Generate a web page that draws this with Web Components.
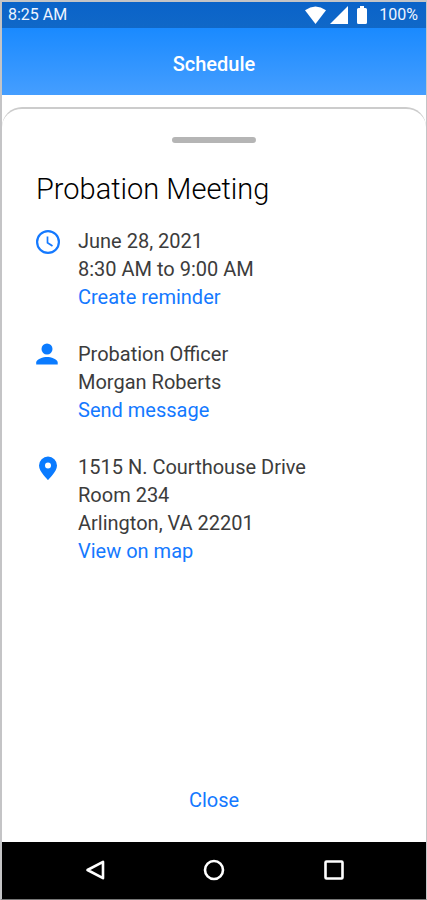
<!DOCTYPE html>
<html lang="en">
<head>
<meta charset="utf-8">
<meta name="viewport" content="width=device-width, initial-scale=1">
<title>Schedule</title>
<style>
  html { height: 100%; }
  body { display: grid; min-height: 100%; margin: 0; font-family: Roboto, "Liberation Sans", sans-serif; color: #3c3c3c; background: #fff; }
</style>
</head>
<body>
<phone-screen>
  <status-bar slot="top" time="8:25 AM" battery="100%"></status-bar>
  <app-header slot="top">Schedule</app-header>
  <bottom-sheet heading="Probation Meeting">
    <detail-row icon="clock">
      <div>June 28, 2021</div>
      <div>8:30 AM to 9:00 AM</div>
      <action-link slot="action" href="#reminder">Create reminder</action-link>
    </detail-row>
    <detail-row icon="person">
      <div>Probation Officer</div>
      <div>Morgan Roberts</div>
      <action-link slot="action" href="#message">Send message</action-link>
    </detail-row>
    <detail-row icon="pin">
      <div>1515 N. Courthouse Drive</div>
      <div>Room 234</div>
      <div>Arlington, VA 22201</div>
      <action-link slot="action" href="#map">View on map</action-link>
    </detail-row>
  </bottom-sheet>
  <nav-bar slot="bottom"></nav-bar>
</phone-screen>

<script>
  const define = (name, render) => customElements.define(name, class extends HTMLElement {
    constructor() {
      super();
      this.attachShadow({ mode: 'open' });
    }
    connectedCallback() {
      this.shadowRoot.innerHTML = render(this);
    }
  });

  define('phone-screen', () => `
    <style>
      :host { display: flex; flex-direction: column; box-sizing: border-box;
              border: solid #c4c4c6; border-width: 2px 1px 1px 2px; border-bottom-color: #777; }
      main { flex: 1; display: flex; flex-direction: column; padding-top: 12px; }
    </style>
    <slot name="top"></slot>
    <main><slot></slot></main>
    <slot name="bottom"></slot>`);

  define('status-bar', el => `
    <style>
      :host { display: flex; align-items: center; justify-content: space-between; height: 26px;
              padding: 0 8px 0 6px; background: linear-gradient(#0a63c9, #1068c8); color: #eef4ff;
              font-size: 16px; line-height: 26px; }
      .right { display: flex; align-items: center; }
      svg { display: block; margin-right: 10px; }
    </style>
    <span>${el.getAttribute('time')}</span>
    <div class="right">
      <svg width="64" height="20" viewBox="0 0 64 20" fill="#fff" aria-hidden="true">
        <path d="M0 5.200Q10.500 -2.200 21 5.200L10.500 19Z"/>
        <path d="M43 1V19H25Z"/>
        <path d="M55 1h4v2h1.500a1.500 1.500 0 0 1 1.500 1.500v13a1.500 1.500 0 0 1-1.500 1.500h-7a1.500 1.500 0 0 1-1.500-1.500v-13a1.500 1.500 0 0 1 1.500-1.500h1.500z"/>
      </svg>
      <span>${el.getAttribute('battery')}</span>
    </div>`);

  define('app-header', () => `
    <style>
      :host { display: block; background: linear-gradient(#1a8aff, #459eff); color: #fff; }
      h1 { margin: 0; padding: 22px 0 17px; text-align: center; font-size: 20px; line-height: 28px; font-weight: 500; }
    </style>
    <h1><slot></slot></h1>`);

  define('bottom-sheet', el => `
    <style>
      :host { flex: 1; display: flex; flex-direction: column; box-sizing: border-box;
              border-top: 2px solid #ccc; border-radius: 20px 20px 0 0; padding: 28px 34px 28px; }
      .handle { align-self: center; width: 84px; height: 6px; border-radius: 3px; background: #b5b5b5; }
      h2 { margin: 28px 0 20px; font-size: 29px; line-height: 36px; font-weight: 300; color: #000; }
      .rows { display: grid; gap: 29px; }
      button { align-self: center; margin-top: auto; padding: 0; border: 0; background: none;
               font: 400 20px/28px Roboto, "Liberation Sans", sans-serif; color: #1479ff; cursor: pointer; }
    </style>
    <div class="handle"></div>
    <h2>${el.getAttribute('heading')}</h2>
    <div class="rows"><slot></slot></div>
    <button type="button">Close</button>`);

  const icons = {
    clock: `<circle cx="12" cy="12" r="10.900" fill="none" stroke="#1479ff" stroke-width="2.200"/>
            <path d="M11.500 6.500v6.300l5 3.200" fill="none" stroke="#1479ff" stroke-width="1.700"/>`,
    person: `<circle cx="11" cy="6" r="5.500"/><path d="M0.200 21.500V19.600C0.200 15.700 7.400 13.900 11 13.900S21.700 15.700 21.700 19.600V21.500Z"/>`,
    pin: `<path fill-rule="evenodd" d="M12 .5A9 9 0 0 0 3 9.500C3 15.700 12 24 12 24S21 15.700 21 9.500A9 9 0 0 0 12 .5ZM12 6.500a3 3 0 1 1 0 6a3 3 0 0 1 0-6Z"/>`
  };

  define('detail-row', el => `
    <style>
      :host { display: grid; grid-template-columns: 24px 1fr; column-gap: 18px;
              font-size: 20px; line-height: 28px; }
      svg { display: block; margin-top: 3px; overflow: visible; }
    </style>
    <svg width="24" height="24" viewBox="0 0 24 24" fill="#0a7bff" aria-hidden="true">${icons[el.getAttribute('icon')]}</svg>
    <div><slot></slot><slot name="action"></slot></div>`);

  define('action-link', el => `
    <style>
      :host { display: block; }
      a { color: #1479ff; text-decoration: none; }
    </style>
    <a href="${el.getAttribute('href')}"><slot></slot></a>`);

  define('nav-bar', () => `
    <style>
      :host { display: block; background: #000; }
      nav { display: flex; justify-content: center; gap: 88px; padding: 12px 0 13px; }
      button { display: block; width: 32px; height: 32px; padding: 0; border: 0; background: none; cursor: pointer; }
      svg { display: block; fill: none; stroke: #fff; stroke-width: 2.600; stroke-linejoin: round; }
    </style>
    <nav aria-label="System">
      <button type="button" aria-label="Back"><svg width="32" height="32" viewBox="0 0 32 32"><path d="M9.500 16L25 7.800V24.200Z"/></svg></button>
      <button type="button" aria-label="Home"><svg width="32" height="32" viewBox="0 0 32 32"><circle cx="16" cy="16" r="9"/></svg></button>
      <button type="button" aria-label="Recent apps"><svg width="32" height="32" viewBox="0 0 32 32"><rect x="7.500" y="7.500" width="17" height="17" rx="1"/></svg></button>
    </nav>`);
</script>
</body>
</html>
